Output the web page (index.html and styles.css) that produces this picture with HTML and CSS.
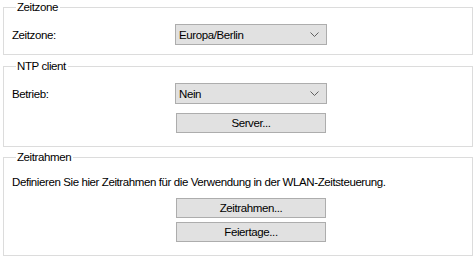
FILE: index.html
```html
<!DOCTYPE html>
<html lang="de">
<head>
<meta charset="utf-8">
<link rel="stylesheet" href="styles.css">
</head>
<body>
<fieldset class="group group-zone">
  <legend>Zeitzone</legend>
  <div class="row">
    <span class="label">Zeitzone:</span>
    <div class="combo"><span>Europa/Berlin</span><svg class="chev" width="9" height="5" viewBox="0 0 9 5"><path d="M0.5 0.5 L4.5 4.5 L8.5 0.5" fill="none" stroke="#606060" stroke-width="1"/></svg></div>
  </div>
</fieldset>
<fieldset class="group group-ntp">
  <legend>NTP client</legend>
  <div class="row">
    <span class="label">Betrieb:</span>
    <div class="combo"><span>Nein</span><svg class="chev" width="9" height="5" viewBox="0 0 9 5"><path d="M0.5 0.5 L4.5 4.5 L8.5 0.5" fill="none" stroke="#606060" stroke-width="1"/></svg></div>
  </div>
  <div class="row row-btn">
    <span class="label"></span>
    <div class="btn">Server...</div>
  </div>
</fieldset>
<fieldset class="group group-frames">
  <legend>Zeitrahmen</legend>
  <p class="desc">Definieren Sie hier Zeitrahmen für die Verwendung in der WLAN-Zeitsteuerung.</p>
  <div class="row row-btn1">
    <span class="label"></span>
    <div class="btn">Zeitrahmen...</div>
  </div>
  <div class="row row-btn2">
    <span class="label"></span>
    <div class="btn">Feiertage...</div>
  </div>
</fieldset>
</body>
</html>
```
FILE: styles.css
```css
* { box-sizing: border-box; }
html, body { margin: 0; padding: 0; background: #fff; }
body {
  width: 476px;
  height: 260px;
  overflow: hidden;
  font-family: "Liberation Sans", Arial, sans-serif;
  font-size: 11.5px;
  letter-spacing: -0.4px;
  color: #000;
}
.group {
  margin: 0 3px 0 3px;
  width: 470px;
  border: 1px solid #dcdcdc;
  padding: 10px 0 9px 8px;
  min-width: 0;
}
.group legend {
  padding: 0 2px 0 1px;
  margin-left: 4px;
  line-height: 14px;
  height: 14px;
}
.group-ntp { margin-top: 4px; padding-bottom: 13px; }
.group-frames { margin-top: 3px; padding-top: 10px; padding-bottom: 13px; }
.row {
  display: grid;
  grid-template-columns: 163px 152px;
  align-items: center;
}
.label { line-height: 14px; }
.combo {
  height: 21px;
  background: #e1e1e1;
  border: 1px solid #adadad;
  display: flex;
  align-items: center;
  justify-content: space-between;
  padding: 0 7px 0 3px;
}
.chev { display: block; }
.btn {
  height: 20px;
  background: #e1e1e1;
  border: 1px solid #adadad;
  display: flex;
  align-items: center;
  justify-content: center;
  width: 150px;
  margin-left: 1px;
}
.row-btn { margin-top: 9px; }
.desc { margin: 0; line-height: 16px; }
.row-btn1 { margin-top: 8px; }
.row-btn2 { margin-top: 4px; }
```
